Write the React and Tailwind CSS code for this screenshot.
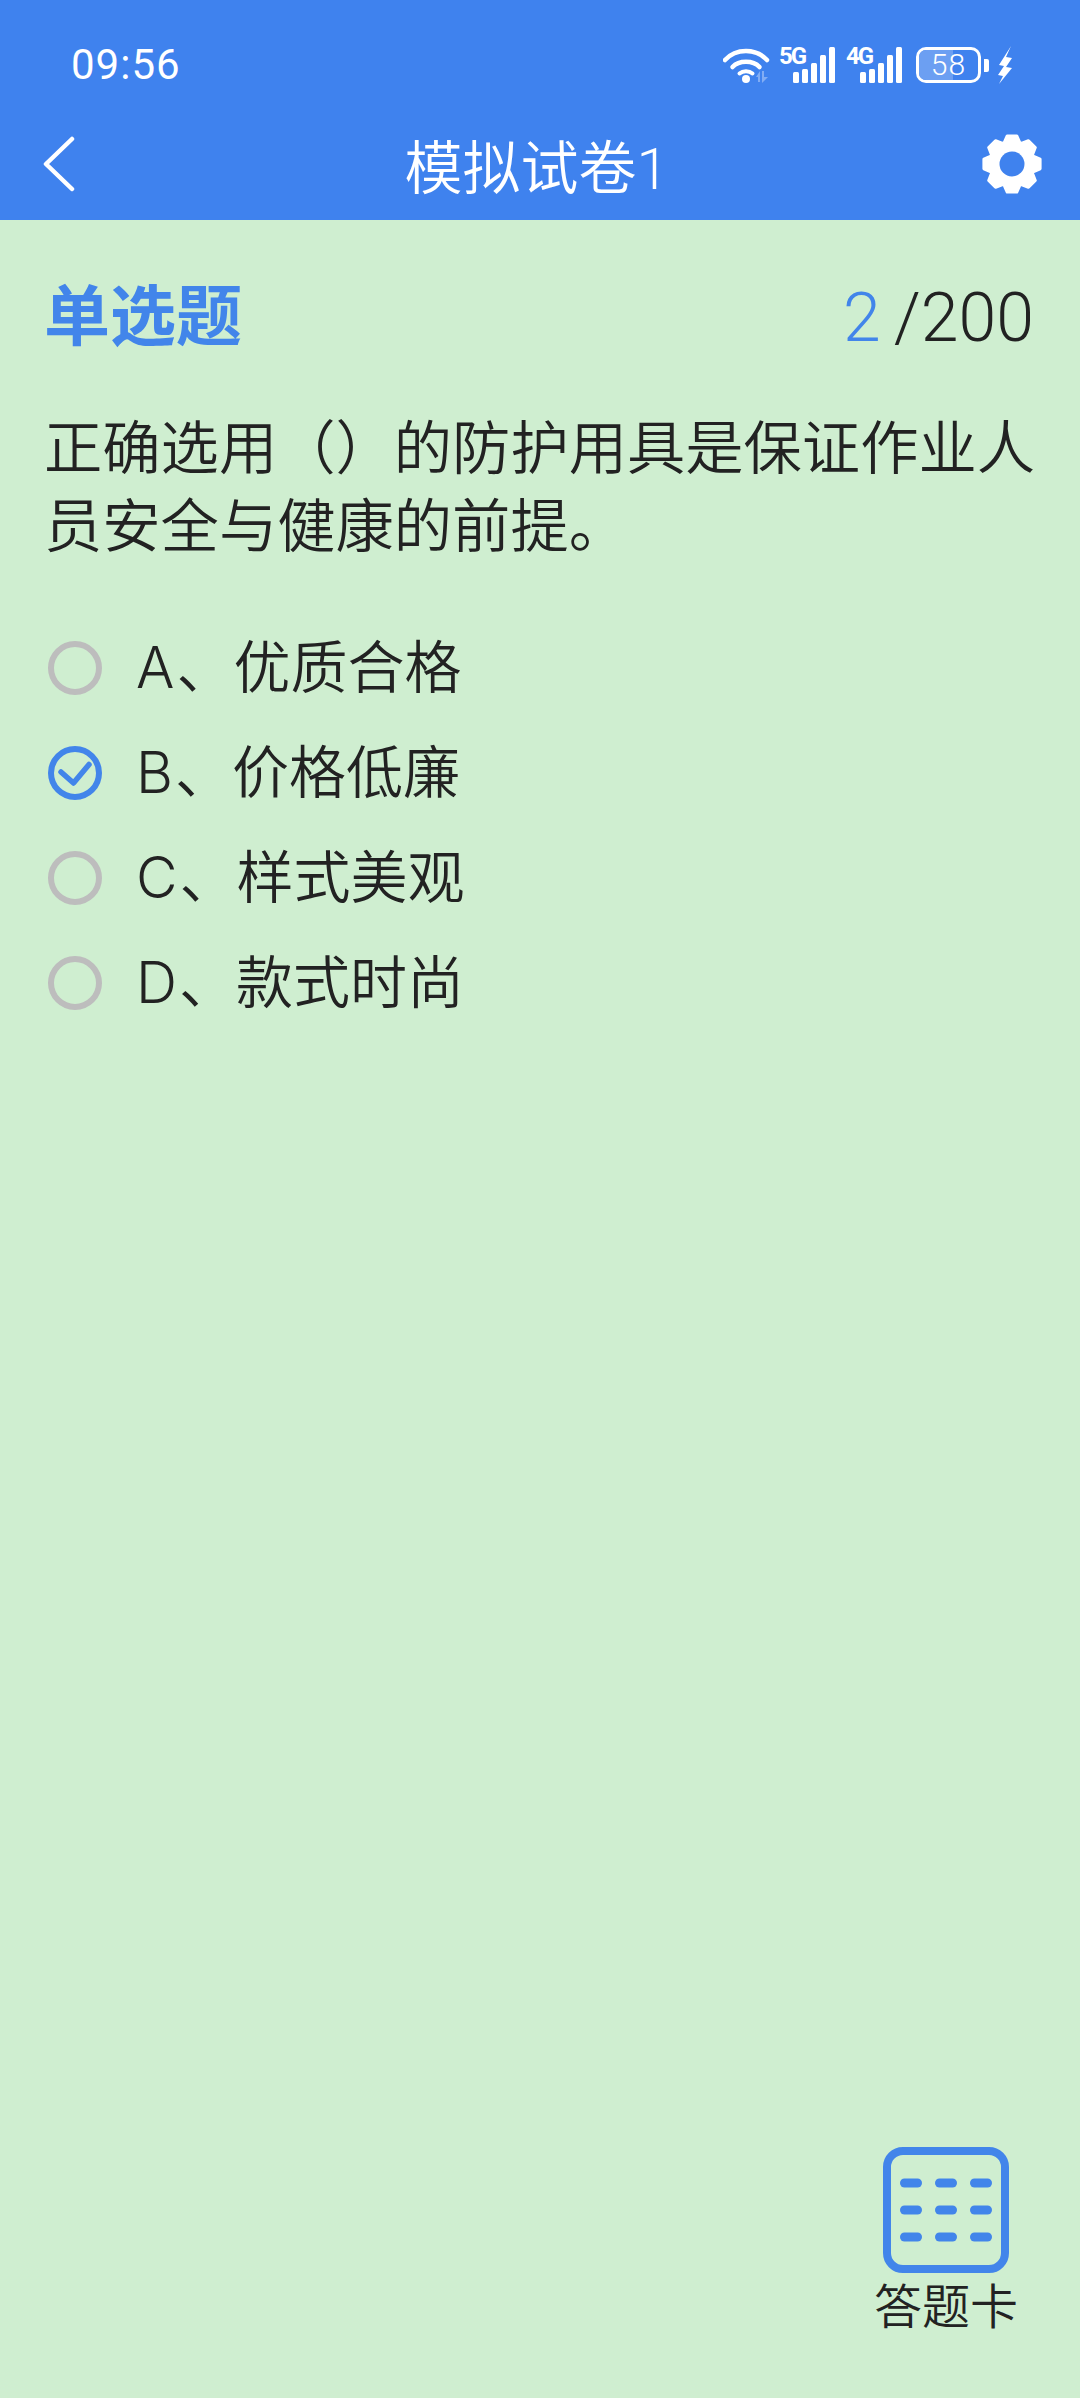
const cjk = { fontFamily: 'Roboto, "Noto Sans CJK SC", sans-serif' };
const optionFont = { fontFamily: 'Inter, "Noto Sans CJK SC", sans-serif' };

const options = [
  { letter: 'A', label: '、优质合格' },
  { letter: 'B', label: '、价格低廉', checked: true },
  { letter: 'C', label: '、样式美观' },
  { letter: 'D', label: '、款式时尚' },
];

function gearPoints() {
  const pts = [];
  const cx = 35;
  const cy = 35;
  for (let i = 0; i < 8; i++) {
    const a = (i * Math.PI) / 4 - Math.PI / 2;
    [
      [-0.36, 22.5],
      [-0.17, 28.5],
      [0.17, 28.5],
      [0.36, 22.5],
    ].forEach(([d, r]) => {
      pts.push(`${(cx + r * Math.cos(a + d)).toFixed(1)},${(cy + r * Math.sin(a + d)).toFixed(1)}`);
    });
  }
  return pts.join(' ');
}

function Wifi() {
  return (
    <svg width="48" height="38" viewBox="0 0 48 38" fill="none">
      <path d="M2 14 C13 2 33 2 44 14" stroke="white" strokeWidth="4.5" strokeLinecap="round" />
      <path d="M9.5 21 C16 14 30 14 36.5 21" stroke="white" strokeWidth="4.5" strokeLinecap="round" />
      <path d="M16.5 27.5 C20 24.5 26 24.5 29.5 27.5" stroke="white" strokeWidth="4" strokeLinecap="round" />
      <circle cx="23" cy="33" r="4" fill="white" />
      <path d="M33 31 L37 25 V36 H35 V31 Z M39 25 H41 V31 H45 L39 37 Z" fill="white" opacity="0.35" />
    </svg>
  );
}

function Signal({ label }) {
  const bars = [
    [14, 11],
    [23, 14],
    [32, 20],
    [41, 28],
    [50, 36],
  ];
  return (
    <div className="relative w-[56px] h-[36px]">
      <span
        className="absolute left-0 top-[-3px] text-[24px] leading-[24px] font-bold text-white tracking-[-2px]"
        style={{ fontFamily: 'Roboto, sans-serif' }}
      >
        {label}
      </span>
      <svg width="56" height="36" viewBox="0 0 56 36" className="absolute left-0 top-0">
        {bars.map(([x, h]) => (
          <rect key={x} x={x} y={36 - h} width="6" height={h} rx="1.5" fill="white" />
        ))}
      </svg>
    </div>
  );
}

function Battery() {
  return (
    <div className="flex items-center">
      <div className="relative w-[65px] h-[36px] rounded-[10px] border-[3px] border-white overflow-hidden flex items-center justify-center">
        <div className="absolute left-0 top-0 bottom-0 w-[58%] bg-[#6c9ff2]" />
        <span
          className="relative text-white text-[30px] leading-none font-light tracking-[1px]"
          style={{ fontFamily: 'Roboto, sans-serif' }}
        >
          58
        </span>
      </div>
      <div className="ml-[3px] w-[5px] h-[13px] rounded-r-[2px] bg-white" />
      <svg width="16" height="38" viewBox="0 0 16 38" className="ml-[8px]">
        <path d="M14 0 L2 19 L7 20 L1 29 L6 30 L2 38 L15 22 L9 21 L15 12 L9 11 Z" fill="white" />
      </svg>
    </div>
  );
}

function Radio({ checked }) {
  if (checked) {
    return (
      <svg width="54" height="54" viewBox="0 0 54 54" fill="none" className="shrink-0">
        <circle cx="27" cy="27" r="24" stroke="#4285ea" strokeWidth="6" />
        <path d="M13 26 L25.5 37 L41 18.5" stroke="#4285ea" strokeWidth="5.5" strokeLinecap="round" strokeLinejoin="round" />
      </svg>
    );
  }
  return <div className="w-[54px] h-[54px] rounded-full border-[6px] border-[#bdbdbd] shrink-0" />;
}

function CardIcon() {
  const ys = [36, 63, 90];
  const xs = [17, 52, 87];
  return (
    <div className="w-[126px] h-[126px] rounded-[20px] border-[8px] border-[#4285ea] relative">
      <svg width="126" height="126" viewBox="0 0 126 126" className="absolute left-[-8px] top-[-8px]">
        {ys.map((y) =>
          xs.map((x) => <rect key={`${x}-${y}`} x={x} y={y - 4.5} width="22" height="9" rx="4.5" fill="#4285ea" />)
        )}
      </svg>
    </div>
  );
}

export default function App() {
  return (
    <div className="w-[1080px] h-[2398px] flex flex-col bg-[#cfeed0]" style={cjk}>
      <div className="bg-[#3f82ee] h-[220px] shrink-0 flex flex-col">
        <div className="h-[86px] flex items-center justify-between pl-[71px] pr-[67px] pt-[44px]">
          <span className="text-white text-[42px] leading-none tracking-[1px]" style={{ fontFamily: 'Roboto, sans-serif' }}>
            09:56
          </span>
          <div className="flex items-center">
            <Wifi />
            <div className="ml-[8px]">
              <Signal label="5G" />
            </div>
            <div className="ml-[11px]">
              <Signal label="4G" />
            </div>
            <div className="ml-[14px]">
              <Battery />
            </div>
          </div>
        </div>
        <div className="flex-1 flex items-center justify-between pl-[42px] pr-[33px] pt-[22px]">
          <svg width="34" height="56" viewBox="0 0 34 56" fill="none">
            <path d="M30 3 L4 28 L30 53" stroke="white" strokeWidth="4.5" strokeLinecap="round" strokeLinejoin="round" />
          </svg>
          <span className="ml-[20px] pt-[10px] text-white text-[58px] leading-none font-[350]">模拟试卷1</span>
          <svg width="70" height="70" viewBox="0 0 70 70">
            <polygon points={gearPoints()} fill="white" stroke="white" strokeWidth="3" strokeLinejoin="round" />
            <circle cx="35" cy="35" r="12.5" fill="#3f82ee" />
          </svg>
        </div>
      </div>

      <div className="flex-1 flex flex-col px-[44px] pt-[65px] pb-[60px]">
        <div className="flex items-center justify-between h-[66px]">
          <span className="text-[66px] leading-none font-bold text-[#4285ea]">单选题</span>
          <span className="mr-[2px] text-[68px] leading-none font-light text-[#222]">
            <span className="text-[#4285ea]">2</span>
            <span className="ml-[13px]">/200</span>
          </span>
        </div>

        <p className="mt-[59px] text-[58.3px] leading-[78px] font-[350] text-[#222]">
          正确选用（）的防护用具是保证作业人员安全与健康的前提。
        </p>

        <div className="mt-[49px] flex flex-col">
          {options.map((o) => (
            <div key={o.letter} className="h-[105px] flex items-center gap-[34px] pl-[4px]">
              <Radio checked={o.checked} />
              <span className="text-[57px] leading-none font-[350] text-[#222]" style={optionFont}>
                <span className="mr-[2px]">{o.letter}</span>
                {o.label}
              </span>
            </div>
          ))}
        </div>

        <div className="mt-auto self-end flex flex-col items-center mr-[18px]">
          <CardIcon />
          <span className="mt-[5px] text-[48px] leading-[60px] font-[350] text-[#222]">答题卡</span>
        </div>
      </div>
    </div>
  );
}
